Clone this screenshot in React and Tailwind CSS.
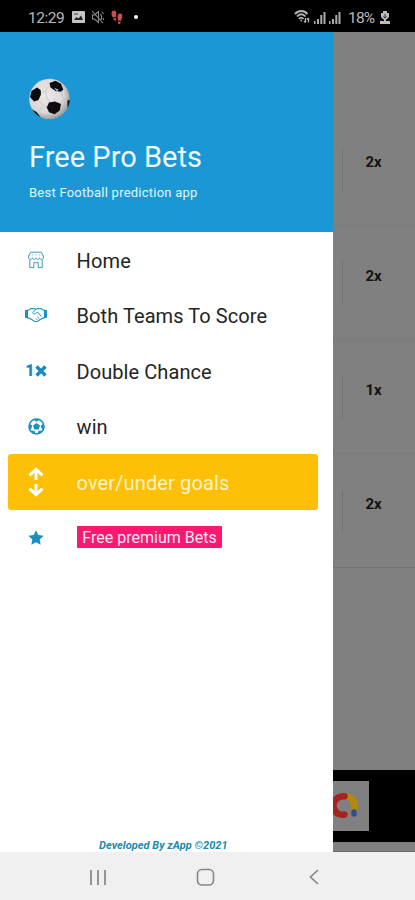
const menuItems = [
  { label: "Home", icon: <StoreIcon />, text: "tracking-[0.15px]" },
  { label: "Both Teams To Score", icon: <HandshakeIcon />, text: "tracking-[0.08px]" },
  { label: "Double Chance", icon: <OneXIcon />, text: "tracking-[0.08px]" },
  { label: "win", icon: <BallIcon />, text: "tracking-[0.1px]" },
  { label: "over/under goals", icon: <UpDownIcon />, text: "tracking-[0.13px]", active: true },
  { label: "Free premium Bets", icon: <StarIcon />, badge: true },
];

const odds = ["2x", "2x", "1x", "2x"];

function StoreIcon() {
  return (
    <svg width="18" height="18" viewBox="0 0 18 18" fill="none" stroke="#3a9cc0" strokeWidth="1">
      <path d="M3.500 1.200h11l1.800 3.800v1.800c0 2.300-3.400 2.300-3.700 0c-.3 2-3.300 2-3.600 0c-.3 2-3.300 2-3.600 0c-.3 2.300-3.700 2.300-3.700 0V5z" />
      <path d="M2.800 8.600v8h4v-5h4.400v5h4v-8M5.400 3.500v.8M9 3.500v.8M12.600 3.500v.8" />
    </svg>
  );
}

function HandshakeIcon() {
  return (
    <svg width="22" height="16" viewBox="0 0 22 16" fill="none" stroke="#2b95c0" strokeWidth="1.200">
      <path d="M0 3.200l3-.8v9.200l-3-.8zM22 3.200l-3-.8v9.200l3-.8z" fill="#1a8fc4" stroke="none" />
      <path d="M3 3.400l3-1.800h3.600l1.400.8l1.400-.8H16l3 1.800M3 10.600l3 1.500l3.200 2.200c1.200.6 2.200.6 3.400 0l3.400-2.200l3-1.500" />
      <path d="M11 2.400L7.600 5.600c.4 1.600 2.600 1.600 3.600.2l1.300-.8l4 4.600M12.500 10l1.600 1.500M11 11.500l1.200 1.300" strokeWidth="1" />
    </svg>
  );
}

function OneXIcon() {
  return (
    <div className="flex items-center text-[#1a8bc2]">
      <span className="text-[16px] leading-none font-black">1</span>
      <svg width="12" height="12" viewBox="0 0 12 12" stroke="currentColor" strokeWidth="3.400">
        <path d="M1.500 1.500l9 9M10.500 1.500l-9 9" />
      </svg>
    </div>
  );
}

function BallIcon() {
  return (
    <svg width="17" height="17" viewBox="0 0 17 17">
      <circle cx="8.500" cy="8.500" r="7.500" fill="#fff" stroke="#1a8fc0" strokeWidth="1.600" />
      <g fill="#1a8fc0">
        <path d="M8.500 4.900l3.500 2.500l-1.300 4.100H6.300L5 7.400z" />
        <path d="M5 1.200h7L8.500 3.800zM1 5.500l3.200 2l-1 3.600l-2.200.2zM16 5.500l-3.200 2l1 3.600l2.200.2zM3 12.700l3.500.1l.9 3.400c-2-.3-3.600-1.500-4.400-3.500zM14 12.700l-3.500.1l-.9 3.400c2-.3 3.600-1.500 4.400-3.500z" />
      </g>
    </svg>
  );
}

function UpDownIcon() {
  return (
    <svg width="16" height="30" viewBox="0 0 16 30" fill="none" stroke="#fff" strokeWidth="3">
      <path d="M8 13V2.800M1.500 8.400L8 2.400l6.500 6M8 17v10.200M1.500 21.600L8 27.600l6.500-6" />
    </svg>
  );
}

function StarIcon() {
  return (
    <svg width="16" height="15" viewBox="0 0 16 15" fill="#198fc4">
      <path d="M8 .2l2.300 4.900l5.300.7l-3.900 3.700l1 5.300L8 12.200l-4.700 2.600l1-5.300L.4 5.800l5.300-.7z" />
    </svg>
  );
}

function SoccerBall() {
  return (
    <svg width="42" height="42" viewBox="0 0 42 42">
      <defs>
        <radialGradient id="ballShade" cx="42%" cy="40%" r="62%">
          <stop offset="0%" stopColor="#ece9e8" />
          <stop offset="70%" stopColor="#dad7d6" />
          <stop offset="100%" stopColor="#999697" />
        </radialGradient>
        <clipPath id="ballClip">
          <circle cx="20.500" cy="21" r="20.300" />
        </clipPath>
      </defs>
      <circle cx="20.500" cy="21" r="20.300" fill="url(#ballShade)" />
      <g clipPath="url(#ballClip)">
        <path
          d="M11.500 15.500l5-2.500l4-6M16.500 13l1.500 7l3 5.500M9.500 22.500l5 5l4 2M32 14l3 7l-3.500 5M35 21l4 2M14.500 27.500l-5 6"
          fill="none"
          stroke="#c3bfbf"
          strokeWidth="0.700"
        />
        <g fill="#0b0c0f">
          <path d="M2.500 13l5.500-3.500l3.700 2.500l.2 4.500l-2.400 5.500l-4.500 1.500L1 19z" />
          <path d="M20.500 5l6-2.200l5.500 3l2.300 5.700l-2.300 2.200l-5.500-.7l-5-3.500z" />
          <path d="M20 24.500l6-1l6 2.500l-1.200 6.500l-5.300 3.800l-5.500-2l-2.200-4.800z" />
          <path d="M3 31.500l4.500 2.500l4 5l-2 2L2 36z" />
          <path d="M38.500 22.500l3-1v8h-3z" />
        </g>
        <path d="M26 10.500l2.500 2M29 11l-2 3" stroke="#8dc5de" strokeWidth="1.200" />
      </g>
    </svg>
  );
}

function StatusBar() {
  return (
    <header className="flex h-8 shrink-0 items-center justify-between bg-black pt-[2px] pr-[25px] pl-7 text-[#b9b9b9]">
      <div className="flex items-center">
        <span className="w-[37px] pt-[2px] text-[15.500px] leading-5 tracking-[-0.500px] whitespace-nowrap">12:29</span>
        <svg className="ml-[7px]" width="13" height="12" viewBox="0 0 13 12">
          <rect width="13" height="12" rx="1" fill="#c6c6c6" />
          <path d="M2 9l2.500-3l2 1.500L9 4.500L11 9z" fill="#222" />
          <path d="M2 3h4" stroke="#444" />
        </svg>
        <svg className="ml-[6px]" width="13" height="14" viewBox="0 0 13 14" fill="none" stroke="#8a8a8a" strokeWidth="1.100">
          <path d="M1.500 5v4h2l4 3.500v-11L3.500 5zM1 1l11 12M9.500 4c1.500 1.500 1.500 4.500 0 6M11 2l1.500 2M12 8l.5 2" />
        </svg>
        <svg className="ml-[7px]" width="12" height="15" viewBox="0 0 12 15" fill="#cf4c55">
          <path d="M1 1.500C2.500-.5 5 .5 5.300 3L5 7L2 7.500C.5 5.500 0 3 1 1.500zM2.300 8.500l2.700-.5l.3 1.500c-.3 1.500-2 1.500-2.500.5zM7 5C8 3 11 3 11.300 5.500c.2 2-.8 3.500-1.300 5.500L7 10.500C6.800 8.500 6 7 7 5zM7 11.500l2.700.5c-.2 3-3.200 3-2.700-.5z" />
        </svg>
        <span className="ml-[11px] size-1 rounded-full bg-white" />
      </div>
      <div className="flex items-center">
        <svg width="17" height="14" viewBox="0 0 17 14" fill="none" stroke="#b5b5b5" strokeWidth="1.900">
          <path d="M1 4c3.500-4 9-4 12.500 0M3 6.500c2.500-3 6-3 8.500 0M5 9c1.500-1.800 3-1.800 4.500 0" />
          <path d="M7.200 9.500v2M11.500 8v4.500M14.500 8v4.500M10 11l1.500 1.500M13 9.500L14.500 8" strokeWidth="1.300" />
        </svg>
        <svg className="ml-[3px]" width="27" height="13" viewBox="0 0 27 13" fill="#aaa">
          <path d="M0 10h1.500v3H0zM3 8h2v5H3zM6.300 4h2v9h-2zM9.500 1h2v12h-2zM15 10h1.500v3H15zM18 8h2v5h-2zM21.300 4h2v9h-2zM24.500 1h2v12h-2z" />
        </svg>
        <span className="ml-[7px] w-[30px] pt-[2px] text-[15.500px] leading-5 tracking-[-0.800px] whitespace-nowrap">18%</span>
        <svg className="ml-[2px]" width="10" height="13" viewBox="0 0 10 13" fill="#bbb">
          <path d="M3 0h4v2h2v4L6.500 8.500h-3L1 6V2h2zM0 10h10v3H0zM4 8h2v2H4z" />
          <path d="M5 3v4M3.300 5.500L5 7l1.700-1.500" stroke="#333" fill="none" />
        </svg>
      </div>
    </header>
  );
}

function MenuItem({ item }) {
  return (
    <li
      className={`flex h-[55.500px] items-center rounded-[3px] text-[20px] ${
        item.active ? "bg-[#fdc007] text-[#fff3c8]" : "text-[#242424]"
      }`}
    >
      <span className="flex w-[57px] shrink-0 justify-center">{item.icon}</span>
      {item.badge ? (
        <span className="ml-[12.500px] flex h-[22px] w-[145px] items-center justify-center rounded-[1px] bg-[#fa1870] pt-[2px] text-[16px] leading-5 whitespace-nowrap text-[#ffe5f0]">
          {item.label}
        </span>
      ) : (
        <span className={`ml-3 pt-[2px] whitespace-nowrap ${item.text}`}>{item.label}</span>
      )}
    </li>
  );
}

function Drawer() {
  return (
    <aside className="flex w-[332.500px] shrink-0 flex-col bg-white">
      <div className="flex h-[200px] shrink-0 flex-col bg-[#1c97d5] pt-[46px] pl-[29px] text-[#eefaff]">
        <SoccerBall />
        <h1 className="mt-[19px] text-[29px] leading-9 tracking-[0.030px]">Free Pro Bets</h1>
        <p className="mt-[9px] text-[13px] leading-[18px] tracking-[0.240px] text-[#e0f6fd]">
          Best Football prediction app
        </p>
      </div>
      <ul className="pr-[14.500px] pl-[7.500px]">
        {menuItems.map((item) => (
          <MenuItem key={item.label} item={item} />
        ))}
      </ul>
      <p className="mt-auto pl-[99px] text-[11px] leading-[12px] font-bold tracking-[0.030px] text-[#2089ac] italic">
        Developed By zApp ©2021
      </p>
    </aside>
  );
}

function AdLogo() {
  return (
    <svg width="36" height="50" viewBox="0 0 36 50" fill="none" strokeWidth="6.500" className="bg-[#808080]">
      <path d="M21 27.500v-4C21 18 16 15 11 15.300" stroke="#b58908" />
      <path d="M11.500 33.500C5 35 .5 30.500 .5 24.500C.5 19 5 15 11.500 15.300" stroke="#a52420" strokeLinecap="round" />
      <path d="M21 27v4" stroke="#b58908" />
      <path d="M21 31v2" stroke="#2e5291" strokeLinecap="round" strokeWidth="5.500" />
    </svg>
  );
}

function DimmedPage() {
  return (
    <main className="flex flex-1 flex-col bg-[#808080]">
      <div className="h-[80px]" />
      {odds.map((value, i) => (
        <div
          key={i}
          className={`flex h-[114px] items-center border-b pb-[14px] pl-[9px] ${
            i === 3 ? "border-[#727272]" : "border-[#7b7b7b]"
          }`}
        >
          <span className="mt-4 h-[43px] w-px bg-[#727272]" />
          <span className="ml-[23px] pt-px text-[15px] leading-none font-bold text-[#131313]">{value}</span>
        </div>
      ))}
      <div className="mt-auto flex h-[72px] items-center bg-black">
        <AdLogo />
      </div>
      <div className="h-[10px] border-b border-[#696969]" />
    </main>
  );
}

function NavBar() {
  return (
    <nav className="grid h-12 shrink-0 grid-cols-[195px_21px_1fr] items-center bg-[#f0f0f0] pt-[2px] text-[#858585]">
      <svg className="ml-[90px]" width="16" height="15" viewBox="0 0 16 15" stroke="currentColor" strokeWidth="1.700">
        <path d="M1 0v15M8 0v15M15 0v15" />
      </svg>
      <svg width="21" height="20" viewBox="0 0 21 20" fill="none" stroke="currentColor" strokeWidth="1.600">
        <rect x="2.500" y="2.500" width="16" height="15.500" rx="4.500" />
      </svg>
      <svg className="ml-[93px]" width="10" height="16" viewBox="0 0 10 16" fill="none" stroke="currentColor" strokeWidth="1.600">
        <path d="M9 1L1.500 8L9 15" />
      </svg>
    </nav>
  );
}

export default function App() {
  return (
    <div className="flex h-[900px] w-[415px] flex-col overflow-hidden font-[Roboto,sans-serif]">
      <StatusBar />
      <div className="flex min-h-0 flex-1">
        <Drawer />
        <DimmedPage />
      </div>
      <NavBar />
    </div>
  );
}
